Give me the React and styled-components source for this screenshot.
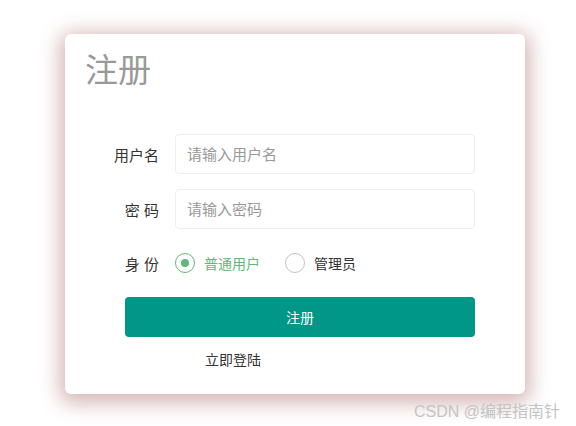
import React, { useState } from "react";
import styled, { createGlobalStyle } from "styled-components";

const Global = createGlobalStyle`
  html, body {
    margin: 0;
    padding: 0;
    background: #fff;
    font-family: "Liberation Sans", "Noto Sans CJK SC", sans-serif;
  }
  * { box-sizing: border-box; }
`;

const Page = styled.div`
  position: relative;
  width: 576px;
  height: 426px;
  padding: 34px 0 0 65px;
`;

const Card = styled.div`
  width: 460px;
  height: 360px;
  background: #fff;
  border-radius: 6px;
  box-shadow: 0 4px 20px 5px rgba(150, 70, 70, 0.4);
  padding: 14px 20px 0 20px;
`;

const Title = styled.h2`
  margin: 0;
  font-size: 33px;
  line-height: 46px;
  font-weight: 400;
  color: #999;
`;

const Form = styled.div`
  margin-top: 40px;
  display: flex;
  flex-direction: column;
  gap: 15px;
`;

const Row = styled.div`
  display: grid;
  grid-template-columns: 74px 300px;
  column-gap: 16px;
  align-items: center;
  height: ${(p) => p.h || 40}px;
`;

const Label = styled.label`
  text-align: right;
  font-size: 15px;
  color: #333;
  white-space: pre;
`;

const Input = styled.input`
  height: 40px;
  width: 300px;
  border: 1px solid #eee;
  border-radius: 4px;
  padding: 0 11px;
  font-size: 15px;
  font-family: inherit;
  color: #333;
  outline: none;
  &::placeholder { color: #999; }
`;

const Radios = styled.div`
  display: flex;
  align-items: center;
  gap: 25px;
`;

const RadioItem = styled.div`
  display: flex;
  align-items: center;
  gap: 9px;
  cursor: pointer;
  font-size: 14px;
  color: ${(p) => (p.checked ? "#5fb878" : "#333")};
`;

const Circle = styled.span`
  width: 20px;
  height: 20px;
  border-radius: 50%;
  border: 1.5px solid ${(p) => (p.checked ? "#5fb878" : "#c2c2c2")};
  display: flex;
  align-items: center;
  justify-content: center;
  &::after {
    content: "";
    width: 8px;
    height: 8px;
    border-radius: 50%;
    background: ${(p) => (p.checked ? "#5fb878" : "transparent")};
  }
`;

const Button = styled.button`
  margin-left: 40px;
  width: 350px;
  height: 40px;
  border: none;
  border-radius: 4px;
  background: #009688;
  color: #fff;
  font-size: 14px;
  font-family: inherit;
  cursor: pointer;
`;

const LoginLink = styled.a`
  display: block;
  margin: 13px 0 0 120px;
  font-size: 14px;
  line-height: 20px;
  color: #333;
  text-decoration: none;
  cursor: pointer;
`;

const Watermark = styled.div`
  position: absolute;
  right: 16px;
  top: 398px;
  font-size: 16px;
  color: #c4c4c4;
`;

export default function App() {
  const [role, setRole] = useState("user");
  const roles = [
    { key: "user", text: "普通用户" },
    { key: "admin", text: "管理员" },
  ];

  return (
    <>
      <Global />
      <Page>
        <Card>
          <Title>注册</Title>
          <Form>
            <Row>
              <Label>用户名</Label>
              <Input placeholder="请输入用户名" />
            </Row>
            <Row>
              <Label>{"密 码"}</Label>
              <Input type="password" placeholder="请输入密码" />
            </Row>
            <Row h={38}>
              <Label>{"身 份"}</Label>
              <Radios>
                {roles.map((r) => (
                  <RadioItem
                    key={r.key}
                    checked={role === r.key}
                    onClick={() => setRole(r.key)}
                  >
                    <Circle checked={role === r.key} />
                    {r.text}
                  </RadioItem>
                ))}
              </Radios>
            </Row>
            <Button>注册</Button>
          </Form>
          <LoginLink>立即登陆</LoginLink>
        </Card>
        <Watermark>CSDN @编程指南针</Watermark>
      </Page>
    </>
  );
}
